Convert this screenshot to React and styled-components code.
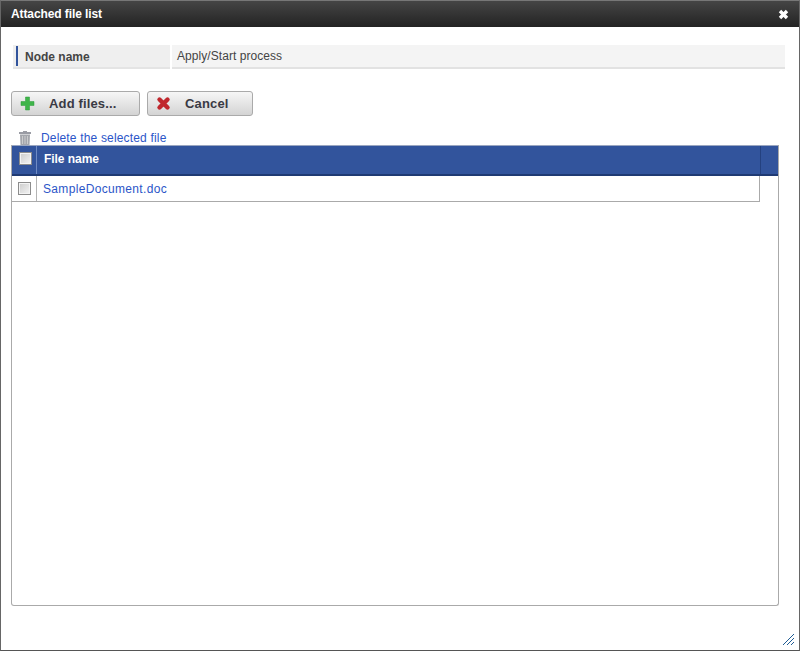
import React from "react";
import styled, { createGlobalStyle } from "styled-components";

const GlobalStyle = createGlobalStyle`
  html, body {
    margin: 0;
    padding: 0;
    background: #fff;
  }
  * {
    box-sizing: border-box;
  }
`;

const Dialog = styled.div`
  display: flex;
  flex-direction: column;
  width: 800px;
  height: 651px;
  background: #fff;
  border: 1px solid #666;
  border-top-color: #777;
  border-bottom-color: #555;
  font-family: "Liberation Sans", Arial, sans-serif;
  font-size: 12px;
  color: #333;
  position: relative;
  overflow: hidden;
`;

const TitleBar = styled.div`
  display: flex;
  align-items: center;
  justify-content: space-between;
  height: 26px;
  flex: none;
  padding: 0 10px 0 10px;
  background: linear-gradient(to bottom, #454545, #232323);
`;

const Title = styled.h1`
  margin: 0;
  font-size: 12px;
  font-weight: bold;
  letter-spacing: -0.1px;
  color: #fff;
`;

const CloseIcon = styled.svg`
  width: 11px;
  height: 11px;
  display: block;
`;

const Body = styled.div`
  display: flex;
  flex-direction: column;
  flex: 1;
  padding: 18px 20px 44px 10px;
`;

const NodeRow = styled.div`
  display: flex;
  gap: 2px;
  height: 24px;
  margin: 0 -6px 0 2px;
`;

const NodeLabel = styled.div`
  display: flex;
  align-items: center;
  width: 157px;
  background: #efefef;
  border-bottom: 2px solid #e4e4e4;
  padding-left: 3px;
  font-weight: bold;
  color: #444;
  &::before {
    content: "";
    width: 2px;
    height: 20px;
    background: #32549c;
    margin-right: 7px;
  }
`;

const NodeLabelText = styled.span`
  position: relative;
  top: 1px;
`;

const NodeValue = styled.div`
  flex: 1;
  background: #f4f4f4;
  border-bottom: 2px solid #e2e2e2;
  padding: 4px 0 0 5px;
  color: #444;
  line-height: 14px;
  letter-spacing: 0.06px;
`;

const Toolbar = styled.div`
  display: flex;
  gap: 7px;
  margin-top: 22px;
`;

const Button = styled.button`
  display: flex;
  align-items: center;
  width: ${(p) => p.$width}px;
  height: 25px;
  padding: 0 0 0 8px;
  border: 1px solid #aaa;
  border-radius: 3px;
  background: linear-gradient(to bottom, #f6f6f6, #d4d4d4);
  font-family: inherit;
  font-size: 13px;
  font-weight: bold;
  letter-spacing: 0.15px;
  color: #3a3a44;
`;

const ButtonIcon = styled.svg`
  width: 15px;
  height: 15px;
  flex: none;
  margin-right: ${(p) => p.$gap}px;
`;

const DeleteRow = styled.div`
  display: flex;
  align-items: flex-start;
  height: 14px;
  margin-top: 15px;
  padding-left: 7px;
`;

const TrashIcon = styled.svg`
  width: 14px;
  height: 14px;
  margin-right: 9px;
  flex: none;
`;

const FileLink = styled.a`
  color: #2b55c8;
  text-decoration: none;
  font-size: 12px;
  line-height: 14px;
  letter-spacing: ${(p) => p.$spacing}px;
`;

const TableFrame = styled.div`
  display: flex;
  flex-direction: column;
  flex: 1;
  border: 1px solid #aaa;
  border-top: 0;
  border-radius: 0 0 3px 3px;
`;

const HeadRow = styled.div`
  display: flex;
  height: 31px;
  background: #32549c;
  border-bottom: 2px solid #1f3a73;
  border-top: 1px solid #9aa6c0;
  color: #fff;
  font-weight: bold;
`;

const CheckCell = styled.div`
  display: flex;
  align-items: center;
  width: 25px;
  flex: none;
  padding-left: ${(p) => (p.$head ? 7 : 6)}px;
  padding-bottom: ${(p) => (p.$head ? 3 : 0)}px;
  border-right: 1px solid ${(p) => (p.$head ? "#6f8bc4" : "#b4b4b4")};
`;

const HeadName = styled.div`
  display: flex;
  align-items: center;
  width: 724px;
  padding: 0 0 3px 7px;
  letter-spacing: -0.05px;
  border-right: 1px solid #24417f;
`;

const DataRow = styled.div`
  display: flex;
  width: 748px;
  height: 26px;
  border-right: 1px solid #aaa;
  border-bottom: 1px solid #aaa;
`;

const NameCell = styled.div`
  display: flex;
  align-items: center;
  padding-left: 6px;
`;

const Check = styled.span`
  display: block;
  width: 13px;
  height: 13px;
  border: 1px solid #8c8c8c;
  background: linear-gradient(135deg, #cccccc, #f4f4f4);
  box-shadow: inset 0 0 0 1px #f4f4f4;
`;

const Grip = styled.svg`
  position: absolute;
  right: 5px;
  bottom: 5px;
  width: 12px;
  height: 12px;
`;

export default function App() {
  return (
    <>
      <GlobalStyle />
      <Dialog>
        <TitleBar>
          <Title>Attached file list</Title>
          <CloseIcon viewBox="0 0 11 11">
            <path d="M2 2 L9 9 M9 2 L2 9" stroke="#fff" strokeWidth="3.4" />
          </CloseIcon>
        </TitleBar>
        <Body>
          <NodeRow>
            <NodeLabel>
              <NodeLabelText>Node name</NodeLabelText>
            </NodeLabel>
            <NodeValue>Apply/Start process</NodeValue>
          </NodeRow>
          <Toolbar>
            <Button $width={129}>
              <ButtonIcon $gap={14} viewBox="0 0 15 15">
                <path d="M5.5 1 H9.5 V5.5 H14 V9.5 H9.5 V14 H5.5 V9.5 H1 V5.5 H5.5 Z" fill="#3fb54a" stroke="#2a9a38" strokeWidth="0.5" />
              </ButtonIcon>
              Add files...
            </Button>
            <Button $width={106}>
              <ButtonIcon $gap={14} viewBox="0 0 15 15">
                <path d="M3.5 3.5 L11.5 11.5 M11.5 3.5 L3.5 11.5" stroke="#c0272d" strokeWidth="4.4" strokeLinecap="round" />
              </ButtonIcon>
              Cancel
            </Button>
          </Toolbar>
          <DeleteRow>
            <TrashIcon viewBox="0 0 14 14">
              <path d="M1 1 H5 V0 H9 V1 H13 V3 H1 Z" fill="#9a9ca4" />
              <path d="M2 3.5 H12 L11.5 14 H2.5 Z" fill="#a4a6ac" />
              <path d="M4.5 5 V13 M7 5 V13 M9.5 5 V13" stroke="#d6d6d6" strokeWidth="0.8" />
            </TrashIcon>
            <FileLink href="#" $spacing={0.17}>Delete the selected file</FileLink>
          </DeleteRow>
          <TableFrame>
            <HeadRow>
              <CheckCell $head>
                <Check />
              </CheckCell>
              <HeadName>File name</HeadName>
            </HeadRow>
            <DataRow>
              <CheckCell>
                <Check />
              </CheckCell>
              <NameCell>
                <FileLink href="#" $spacing={0.33}>SampleDocument.doc</FileLink>
              </NameCell>
            </DataRow>
          </TableFrame>
        </Body>
        <Grip viewBox="0 0 12 12">
          <path d="M1 12 L12 1 M5 12 L12 5 M9 12 L12 9" stroke="#1f5c94" strokeWidth="1" />
        </Grip>
      </Dialog>
    </>
  );
}
